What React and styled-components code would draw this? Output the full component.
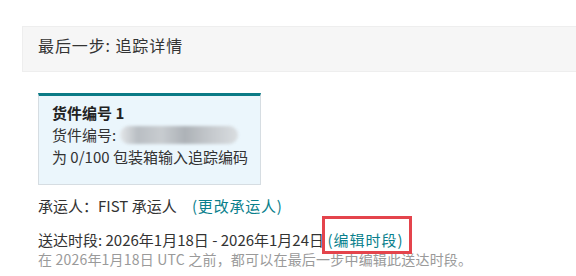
import React from 'react';
import styled, { createGlobalStyle } from 'styled-components';

const GlobalStyle = createGlobalStyle`
  html, body {
    margin: 0;
    padding: 0;
    background: #fff;
  }
  body {
    font-family: "Noto Sans CJK SC", "Liberation Sans", sans-serif;
    color: #333;
  }
`;

const Page = styled.div`
  width: 576px;
  height: 276px;
  overflow: hidden;
  padding-top: 26px;
  box-sizing: border-box;
`;

const StepHeader = styled.div`
  margin-left: 22px;
  height: 46px;
  box-sizing: border-box;
  padding: 7px 0 0 15px;
  background: #f6f6f6;
  border: 1px solid #eeeeee;
  border-right: none;
  font-size: 16px;
  letter-spacing: 0.9px;
  line-height: 22px;
  color: #333;
`;

const Body = styled.div`
  padding: 21px 0 0 38px;
`;

const Card = styled.div`
  width: 223px;
  height: 92px;
  box-sizing: border-box;
  background: #ebf6fc;
  border: 1px solid #d6dde2;
  border-top: 3px solid #0b7b86;
  padding: 6px 0 0 13px;
  font-size: 15px;
  line-height: 22px;
  color: #333;
`;

const CardTitle = styled.div`
  font-weight: 700;
  color: #222;
`;

const CardLine = styled.div`
  white-space: nowrap;
  display: flex;
  align-items: center;
`;

const Blurred = styled.span`
  display: inline-block;
  width: 118px;
  height: 18px;
  margin-left: 4px;
  border-radius: 9px;
  background: linear-gradient(90deg, #e3e6e9 0%, #b9bec3 15%, #c8ccd0 35%, #adb2b7 55%, #c3c7cb 75%, #d9dde0 100%);
  filter: blur(1.5px);
`;

const InfoLine = styled.div`
  font-size: 15px;
  line-height: ${p => p.$lh || 22}px;
  margin-top: ${p => p.$mt || 0}px;
  color: #333;
  white-space: nowrap;
`;

const Note = styled.div`
  font-size: 14px;
  letter-spacing: 0.2px;
  line-height: 18px;
  color: #9a9a9a;
  white-space: nowrap;
`;

const Link = styled.a`
  color: #0a7f8c;
  text-decoration: none;
  margin-left: ${p => p.$ml || 0}px;
  letter-spacing: ${p => p.$ls || 0}px;
`;

const Highlight = styled.span`
  position: relative;
  &::after {
    content: '';
    position: absolute;
    left: -5px;
    right: -8px;
    top: -13px;
    bottom: -4px;
    border: 3px solid #e4444c;
    pointer-events: none;
  }
`;

export default function App() {
  return (
    <>
      <GlobalStyle />
      <Page>
        <StepHeader>最后一步: 追踪详情</StepHeader>
        <Body>
          <Card>
            <CardTitle>货件编号 1</CardTitle>
            <CardLine>货件编号: <Blurred /></CardLine>
            <CardLine>为 0/100 包装箱输入追踪编码</CardLine>
          </Card>
          <InfoLine $mt={10}>
            承运人：FIST 承运人 <Link $ml={12} $ls={0.8}>(更改承运人)</Link>
          </InfoLine>
          <InfoLine $mt={13} $lh={20}>
            送达时段: 2026年1月18日 - 2026年1月24日{' '}
            <Highlight><Link $ls={1}>(编辑时段)</Link></Highlight>
          </InfoLine>
          <Note>在 2026年1月18日 UTC 之前，都可以在最后一步中编辑此送达时段。</Note>
        </Body>
      </Page>
    </>
  );
}
